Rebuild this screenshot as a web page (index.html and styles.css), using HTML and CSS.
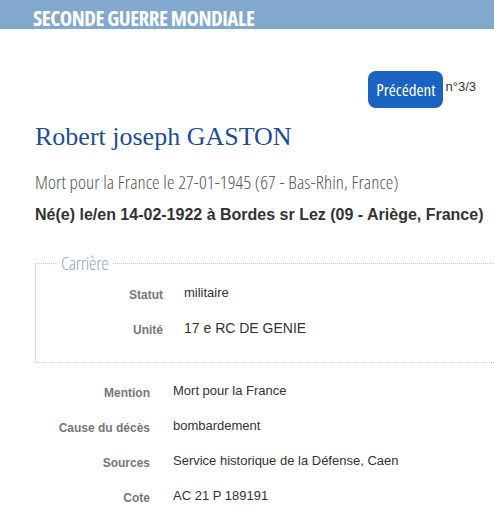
FILE: index.html
```html
<!DOCTYPE html>
<html lang="fr">
<head>
    <meta charset="UTF-8">
    <title>Robert joseph GASTON</title>
    <link rel="stylesheet" href="styles.css">
</head>
<body>
<div class="bandeau">
    <h1 class="bandeau-titre">Seconde Guerre Mondiale</h1>
</div>

<div class="fiche">
    <div class="nav">
        <a class="btn-prec" href="#">Précédent</a>
        <span class="compteur">n°3/3</span>
    </div>

    <h2 class="nom">Robert joseph GASTON</h2>
    <p class="deces">Mort pour la France le 27-01-1945 (67 - Bas-Rhin, France)</p>
    <p class="naissance">Né(e) le/en 14-02-1922 à Bordes sr Lez (09 - Ariège, France)</p>

    <fieldset class="carriere">
        <legend>Carrière</legend>
        <dl class="infos">
            <dt>Statut</dt>
            <dd>militaire</dd>
            <dt>Unité</dt>
            <dd class="grand">17 e RC DE GENIE</dd>
        </dl>
    </fieldset>

    <dl class="infos infos-bas">
        <dt>Mention</dt>
        <dd>Mort pour la France</dd>
        <dt>Cause du décès</dt>
        <dd>bombardement</dd>
        <dt>Sources</dt>
        <dd>Service historique de la Défense, Caen</dd>
        <dt>Cote</dt>
        <dd>AC 21 P 189191</dd>
    </dl>
</div>
</body>
</html>
```

FILE: styles.css
```css
body {
    margin: 0;
    background: #fff;
    font-family: "Liberation Sans", Arial, sans-serif;
    color: #333;
}

.bandeau {
    height: 29px;
    background-color: #82a9cd;
}

/* police étroite : Open Sans en largeur 75% */
.bandeau-titre {
    margin: 0;
    padding: 7px 0 0 33px;
    font-family: "Open Sans", sans-serif;
    font-stretch: 75%;
    font-weight: bold;
    font-size: 21px;
    line-height: 22px;
    letter-spacing: -0.5px;
    text-transform: uppercase;
    color: #fff;
}

.fiche {
    padding: 0 0 0 35px;
}

.nav {
    display: flex;
    justify-content: flex-end;
    align-items: center;
    padding: 42px 18px 0 0;
}

.btn-prec {
    display: inline-block;
    height: 37px;
    line-height: 37px;
    padding: 0 8px;
    border-radius: 8px;
    background-color: #1b63c0;
    color: #fff;
    text-decoration: none;
    font-family: "Open Sans", sans-serif;
    font-stretch: 75%;
    font-size: 17px;
}

.compteur {
    margin: -6px 0 0 2px;
    font-size: 13px;
    color: #333;
}

.nom {
    margin: 14px 0 0;
    font-family: "Liberation Serif", Georgia, serif;
    font-weight: normal;
    font-size: 26px;
    color: #1e4d94;
}

.deces {
    margin: 17px 0 0;
    font-family: "Open Sans", sans-serif;
    font-stretch: 75%;
    font-weight: 300;
    font-size: 19px;
    letter-spacing: 0.1px;
    color: #555;
}

.naissance {
    margin: 11px 0 0;
    font-weight: bold;
    font-size: 16px;
    color: #333;
}

.carriere {
    margin: 26px -20px 0 0;
    padding: 9px 0 25px;
    border: 1px dotted #ccc;
}

.carriere legend {
    margin-left: 20px;
    padding: 0 5px;
    font-family: "Open Sans", sans-serif;
    font-stretch: 75%;
    font-weight: 300;
    font-size: 19px;
    letter-spacing: -0.3px;
    color: #8ea8c0;
}

.infos {
    display: grid;
    grid-template-columns: 127px 1fr;
    column-gap: 21px;
    row-gap: 18px;
    margin: 0;
}

.infos dt {
    text-align: right;
    font-weight: bold;
    font-size: 12px;
    color: #777;
    padding-top: 3px;
}

.infos dd {
    margin: 0;
    font-size: 13px;
    color: #333;
}

.infos .grand {
    font-size: 14px;
}

.infos-bas {
    grid-template-columns: 115px 1fr;
    column-gap: 23px;
    margin-top: 20px;
    padding-bottom: 20px;
}
```
